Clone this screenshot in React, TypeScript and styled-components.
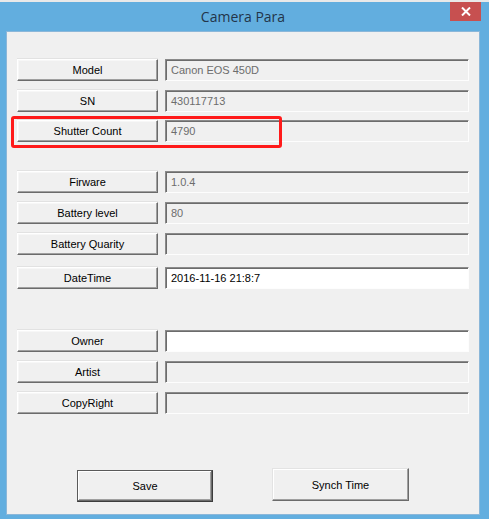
import styled, { createGlobalStyle } from 'styled-components';

const GlobalStyle = createGlobalStyle`
  html, body {
    margin: 0;
    padding: 0;
    background: #62aedf;
  }
  * {
    box-sizing: border-box;
  }
`;

const Window = styled.div`
  width: 489px;
  height: 519px;
  background: #62aedf;
  display: flex;
  flex-direction: column;
  font-family: "Liberation Sans", Arial, sans-serif;
  overflow: hidden;
`;

const TopStrip = styled.div`
  height: 2px;
  background: #e9e9e9;
  flex-shrink: 0;
`;

const TitleBar = styled.div`
  position: relative;
  height: 29px;
  display: flex;
  align-items: center;
  justify-content: center;
  padding-right: 3px;
  flex-shrink: 0;
`;

const Title = styled.span`
  font-family: "Open Sans", "Noto Sans", sans-serif;
  font-size: 14px;
  color: #23354a;
  margin-bottom: 1px;
`;

const CloseButton = styled.div`
  position: absolute;
  top: 0;
  right: 8px;
  width: 31px;
  height: 19px;
  background: #c75050;
  display: flex;
  align-items: center;
  justify-content: center;
`;

const Client = styled.div`
  flex: 1;
  margin: 0 9px 4px 6px;
  background: #f0f0f0;
  border: 1px solid #8bb7d9;
  padding: 27px 0 0 10px;
  display: flex;
  flex-direction: column;
`;

const Row = styled.div<{ $space: number }>`
  position: relative;
  display: grid;
  grid-template-columns: 141px 304px;
  column-gap: 7px;
  height: 22px;
  margin-top: ${(p) => p.$space}px;
`;

const LabelButton = styled.div`
  display: flex;
  align-items: center;
  justify-content: center;
  background: #f0f0f0;
  border: 1px solid;
  border-color: #ffffff #6b6b6b #6b6b6b #ffffff;
  box-shadow: inset -1px -1px 0 #a0a0a0, inset 1px 1px 0 #f7f7f7, 0 -1px 0 #e2e2e2;
  font-size: 11px;
  color: #000;
`;

const Field = styled.div<{ $editable?: boolean }>`
  display: flex;
  align-items: center;
  padding: 0 0 1px 5px;
  background: ${(p) => (p.$editable ? '#ffffff' : '#f0f0f0')};
  border: 1px solid;
  border-color: #8a8a8a #fdfdfd #fdfdfd #8a8a8a;
  box-shadow: inset 1px 1px 0 #6c6c6c;
  font-size: 11px;
  color: ${(p) => (p.$editable ? '#000000' : '#6d6d6d')};
`;

const Highlight = styled.div`
  position: absolute;
  left: -6px;
  top: -4px;
  width: 271px;
  height: 32px;
  border: 3px solid #ff1a1a;
  border-radius: 3px;
  pointer-events: none;
`;

const Footer = styled.div`
  display: flex;
  align-items: flex-start;
  gap: 59px;
  margin-top: 54px;
  padding-left: 60px;
`;

const ActionButton = styled.div<{ $default?: boolean }>`
  display: flex;
  align-items: center;
  justify-content: center;
  font-size: 11px;
  color: #000;
  background: #f0f0f0;
  width: ${(p) => (p.$default ? 136 : 137)}px;
  height: ${(p) => (p.$default ? 32 : 33)}px;
  margin-top: ${(p) => (p.$default ? 2 : 0)}px;
  border: 1px solid;
  border-color: ${(p) =>
    p.$default ? '#5a5a5a #3c3c3c #3c3c3c #5a5a5a' : '#e3e3e3 #6b6b6b #6b6b6b #e3e3e3'};
  box-shadow: ${(p) =>
    p.$default
      ? 'inset -1px -1px 0 #6b6b6b, inset 1px 1px 0 #ffffff, inset -2px -2px 0 #a0a0a0'
      : 'inset -1px -1px 0 #a0a0a0, inset 1px 1px 0 #ffffff'};
`;

type Item = {
  label: string;
  value: string;
  space: number;
  editable?: boolean;
  marked?: boolean;
};

const items: Item[] = [
  { label: 'Model', value: 'Canon EOS 450D', space: 0 },
  { label: 'SN', value: '430117713', space: 9 },
  { label: 'Shutter Count', value: '4790', space: 8, marked: true },
  { label: 'Firware', value: '1.0.4', space: 29 },
  { label: 'Battery level', value: '80', space: 9 },
  { label: 'Battery Quarity', value: '', space: 9 },
  { label: 'DateTime', value: '2016-11-16 21:8:7', space: 12, editable: true },
  { label: 'Owner', value: '', space: 41, editable: true },
  { label: 'Artist', value: '', space: 9 },
  { label: 'CopyRight', value: '', space: 9 },
];

const App = () => (
  <>
    <GlobalStyle />
    <Window>
      <TopStrip />
      <TitleBar>
        <Title>Camera Para</Title>
        <CloseButton>
          <svg width="10" height="9" viewBox="0 0 10 9">
            <path d="M1 0.5 L9 8.5 M9 0.5 L1 8.5" stroke="#fff" strokeWidth="2" />
          </svg>
        </CloseButton>
      </TitleBar>
      <Client>
        {items.map((item) => (
          <Row key={item.label} $space={item.space}>
            <LabelButton>{item.label}</LabelButton>
            <Field $editable={item.editable}>{item.value}</Field>
            {item.marked && <Highlight />}
          </Row>
        ))}
        <Footer>
          <ActionButton $default>Save</ActionButton>
          <ActionButton>Synch Time</ActionButton>
        </Footer>
      </Client>
    </Window>
  </>
);

export default App;
